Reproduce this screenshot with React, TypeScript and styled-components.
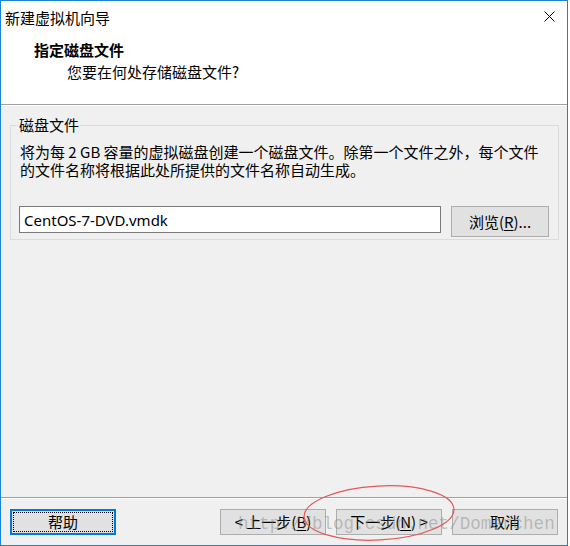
import React from "react";
import styled, { createGlobalStyle } from "styled-components";

const GlobalStyle = createGlobalStyle`
  html, body {
    margin: 0;
    padding: 0;
    background: #ffffff;
  }
  body {
    font-family: "Noto Sans", "Noto Sans CJK SC", sans-serif;
    font-size: 15px;
    color: #000;
  }
`;

const cjk = `"Noto Sans CJK SC", "Noto Sans", sans-serif`;

const Window = styled.div`
  position: relative;
  box-sizing: border-box;
  width: 568px;
  height: 546px;
  border: 1px solid #1883d7;
  background: #f0f0f0;
  display: flex;
  flex-direction: column;
  overflow: hidden;
`;

const TitleBar = styled.div`
  height: 32px;
  background: #fff;
  display: flex;
  align-items: center;
  justify-content: space-between;
  padding: 0 12px 0 4px;
  font-family: ${cjk};
  font-size: 15px;
`;

const CloseButton = styled.div`
  width: 11px;
  height: 11px;
  display: flex;
  margin-top: -1px;
`;

const Header = styled.div`
  height: 71px;
  box-sizing: border-box;
  background: #fff;
  padding-top: 6px;
  font-family: ${cjk};
  font-size: 15px;
  line-height: 22px;
`;

const HeaderTitle = styled.div`
  padding-left: 33px;
  font-weight: bold;
`;

const HeaderSub = styled.div`
  padding-left: 66px;
`;

const Etched = styled.div`
  height: 1px;
  background: #a0a0a0;
  border-bottom: 1px solid #ffffff;
  flex-shrink: 0;
`;

const Content = styled.div`
  flex: 1;
  padding: 10px 8px 0 9px;
`;

const Group = styled.fieldset`
  margin: 0;
  border: 1px solid #dcdcdc;
  padding: 0 9px 2px 8px;
  font-family: ${cjk};
`;

const Legend = styled.legend`
  padding: 0 1px;
  margin-left: -1px;
  font-size: 15px;
  line-height: 18px;
`;

const Description = styled.p`
  margin: 9px 0 0 1px;
  font-size: 15px;
  line-height: 18px;
`;

const FileRow = styled.div`
  display: flex;
  align-items: flex-start;
  gap: 10px;
  margin-top: 27px;
`;

const PathInput = styled.input`
  box-sizing: border-box;
  width: 422px;
  height: 27px;
  border: 1px solid #7a7a7a;
  background: #fff;
  padding: 0 4px;
  font-family: "Noto Sans", sans-serif;
  font-size: 15px;
  color: #000;
  outline: none;
`;

const Button = styled.div<{ $w?: number; $h?: number; $focus?: boolean }>`
  box-sizing: border-box;
  width: ${(p) => p.$w ?? 106}px;
  height: ${(p) => p.$h ?? 26}px;
  background: #e1e1e1;
  border: ${(p) => (p.$focus ? "2px solid #0078d7" : "1px solid #adadad")};
  display: flex;
  align-items: center;
  justify-content: center;
  font-family: ${cjk};
  font-size: 15px;
  line-height: 18px;
  position: relative;
  ${(p) =>
    p.$focus
      ? `&::after {
    content: "";
    position: absolute;
    inset: 1px;
    border: 1px dotted #000;
  }`
      : ""}
`;

const Key = styled.span`
  text-decoration: underline;
  text-underline-offset: 2px;
`;

const Footer = styled.div`
  height: 46px;
  box-sizing: border-box;
  padding: 10px 9px 0 9px;
  display: flex;
  align-items: flex-start;
`;

const NavButtons = styled.div`
  margin-left: auto;
  display: flex;
  gap: 10px;
`;

const Watermark = styled.div`
  position: absolute;
  left: 237px;
  top: 512px;
  font-family: "Liberation Mono", monospace;
  font-size: 17.6px;
  line-height: 22px;
  color: rgba(130, 130, 130, 0.45);
  pointer-events: none;
  white-space: nowrap;
`;

const Ellipse = styled.svg`
  position: absolute;
  left: 300px;
  top: 480px;
  pointer-events: none;
`;

export default function App() {
  return (
    <>
      <GlobalStyle />
      <Window>
        <TitleBar>
          <span>新建虚拟机向导</span>
          <CloseButton>
            <svg width="11" height="11" viewBox="0 0 11 11">
              <path d="M0.5 0.5 L10.5 10.5 M10.5 0.5 L0.5 10.5" stroke="#000" strokeWidth="1" />
            </svg>
          </CloseButton>
        </TitleBar>
        <Header>
          <HeaderTitle>指定磁盘文件</HeaderTitle>
          <HeaderSub>您要在何处存储磁盘文件?</HeaderSub>
        </Header>
        <Etched />
        <Content>
          <Group>
            <Legend>磁盘文件</Legend>
            <Description>
              将为每 2 GB 容量的虚拟磁盘创建一个磁盘文件。除第一个文件之外，每个文件
              <br />
              的文件名称将根据此处所提供的文件名称自动生成。
            </Description>
            <FileRow>
              <PathInput defaultValue="CentOS-7-DVD.vmdk" />
              <Button $w={98} $h={31}>
                浏览(<Key>R</Key>)...
              </Button>
            </FileRow>
          </Group>
        </Content>
        <Etched />
        <Footer>
          <Button $focus>帮助</Button>
          <NavButtons>
            <Button>
              &lt; 上一步(<Key>B</Key>)
            </Button>
            <Button>
              下一步(<Key>N</Key>) &gt;
            </Button>
            <Button>取消</Button>
          </NavButtons>
        </Footer>
        <Watermark>http://blog.csdn.net/Domerchen</Watermark>
        <Ellipse width="160" height="66" viewBox="0 0 160 66">
          <ellipse
            cx="78"
            cy="32"
            rx="75"
            ry="27"
            fill="none"
            stroke="#e05a5a"
            strokeWidth="1.2"
            transform="rotate(-3 78 32)"
          />
        </Ellipse>
      </Window>
    </>
  );
}
